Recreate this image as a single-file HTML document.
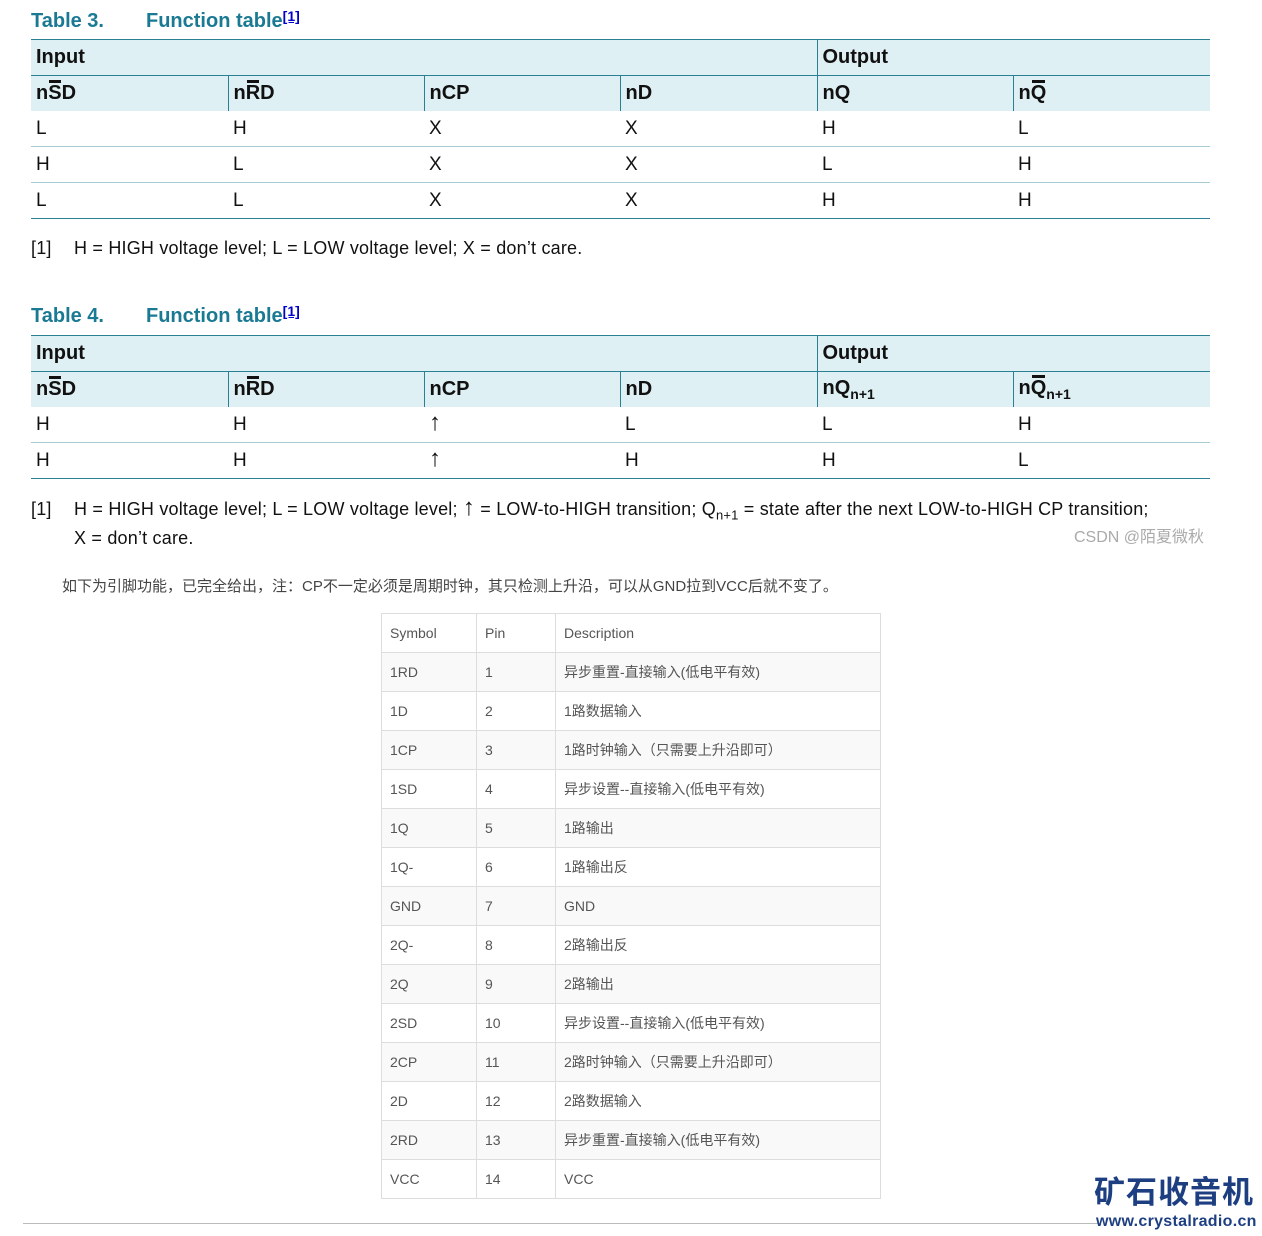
<!DOCTYPE html>
<html><head><meta charset="utf-8"><style>
body{margin:0;width:1262px;height:1236px;background:#fff;position:relative;font-family:"Liberation Sans",Arial,sans-serif;overflow:hidden}
.t{position:absolute;font-weight:bold;font-size:20px;color:#1b7a93}
.t sup{font-size:14px;color:#0000cc;text-decoration:underline;vertical-align:6px}
table.f{position:absolute;left:31px;width:1179px;border-collapse:collapse;table-layout:fixed;font-size:19px;color:#111}
table.f td{padding:0 0 0 5px;height:35px;border-bottom:1px solid #a9cdd6;vertical-align:middle}
table.f tr.h td{background:#dff0f4;font-weight:bold;font-size:20px}
table.f tr.top td{border-top:1px solid #2b7f93;border-bottom:1px solid #2b7f93}
table.f tr.h2 td{border-bottom:none;border-left:1px solid #2b7f93}
table.f tr.h2 td:first-child{border-left:none}
table.f tr.last td{border-bottom:1px solid #2b7f93}
.ob{position:relative}
.ob:before{content:"";position:absolute;left:1px;right:1px;top:-2px;height:3px;background:#111}
.ar{font-size:24px;line-height:20px}
.note{position:absolute;left:31px;font-size:18px;color:#111;letter-spacing:0.2px}
.note b{font-weight:normal;display:inline-block;width:43px}
.p{position:absolute;left:381px;top:613px;width:500px;border-collapse:collapse;table-layout:fixed;font-size:14px;color:#555;font-family:"Liberation Sans","Noto Sans CJK SC",sans-serif}
.p td{height:38px;border:1px solid #ddd;padding:0 0 0 8px}
.p tr:nth-child(even) td{background:#f9f9f9}
</style></head><body>
<div class="t" style="left:31px;top:8px">Table 3.<span style="margin-left:42px">Function table</span><sup>[1]</sup></div>
<table class="f" style="top:39px">
<colgroup><col style="width:197px"><col style="width:196px"><col style="width:196px"><col style="width:197px"><col style="width:196px"><col style="width:197px"></colgroup>
<tr class="h top"><td colspan="4">Input</td><td colspan="2" style="border-left:1px solid #2b7f93">Output</td></tr>
<tr class="h h2"><td>n<span class="ob">S</span>D</td><td>n<span class="ob">R</span>D</td><td>nCP</td><td>nD</td><td>nQ</td><td>n<span class="ob">Q</span></td></tr>
<tr><td>L</td><td>H</td><td>X</td><td>X</td><td>H</td><td>L</td></tr>
<tr><td>H</td><td>L</td><td>X</td><td>X</td><td>L</td><td>H</td></tr>
<tr class="last"><td>L</td><td>L</td><td>X</td><td>X</td><td>H</td><td>H</td></tr>
</table>
<div class="note" style="top:238px"><b>[1]</b>H = HIGH voltage level; L = LOW voltage level; X = don’t care.</div>

<div class="t" style="left:31px;top:303px">Table 4.<span style="margin-left:42px">Function table</span><sup>[1]</sup></div>
<table class="f" style="top:335px">
<colgroup><col style="width:197px"><col style="width:196px"><col style="width:196px"><col style="width:197px"><col style="width:196px"><col style="width:197px"></colgroup>
<tr class="h top"><td colspan="4">Input</td><td colspan="2" style="border-left:1px solid #2b7f93">Output</td></tr>
<tr class="h h2"><td>n<span class="ob">S</span>D</td><td>n<span class="ob">R</span>D</td><td>nCP</td><td>nD</td><td>nQ<sub style="font-size:14px">n+1</sub></td><td>n<span class="ob">Q</span><sub style="font-size:14px">n+1</sub></td></tr>
<tr><td>H</td><td>H</td><td><span class="ar">↑</span></td><td>L</td><td>L</td><td>H</td></tr>
<tr class="last"><td>H</td><td>H</td><td><span class="ar">↑</span></td><td>H</td><td>H</td><td>L</td></tr>
</table>
<div class="note" style="top:498px;line-height:23px"><b>[1]</b>H = HIGH voltage level; L = LOW voltage level; <span class="ar">↑</span> = LOW-to-HIGH transition; Q<sub style="font-size:13px">n+1</sub> = state after the next LOW-to-HIGH CP transition;<br><b></b>X = don’t care.</div>
<div style="position:absolute;left:1074px;top:523px;font-size:16px;color:#aaa;font-family:'Liberation Sans','Noto Sans CJK SC',sans-serif">CSDN @陌夏微秋</div>

<div style="position:absolute;left:62px;top:575px;font-size:15px;color:#444;font-family:'Liberation Sans','Noto Sans CJK SC',sans-serif">如下为引脚功能，已完全给出，注：CP不一定必须是周期时钟，其只检测上升沿，可以从GND拉到VCC后就不变了。</div>

<table class="p">
<colgroup><col style="width:95px"><col style="width:79px"><col></colgroup>
<tr><td>Symbol</td><td>Pin</td><td>Description</td></tr>
<tr><td>1RD</td><td>1</td><td>异步重置-直接输入(低电平有效)</td></tr>
<tr><td>1D</td><td>2</td><td>1路数据输入</td></tr>
<tr><td>1CP</td><td>3</td><td>1路时钟输入（只需要上升沿即可）</td></tr>
<tr><td>1SD</td><td>4</td><td>异步设置--直接输入(低电平有效)</td></tr>
<tr><td>1Q</td><td>5</td><td>1路输出</td></tr>
<tr><td>1Q-</td><td>6</td><td>1路输出反</td></tr>
<tr><td>GND</td><td>7</td><td>GND</td></tr>
<tr><td>2Q-</td><td>8</td><td>2路输出反</td></tr>
<tr><td>2Q</td><td>9</td><td>2路输出</td></tr>
<tr><td>2SD</td><td>10</td><td>异步设置--直接输入(低电平有效)</td></tr>
<tr><td>2CP</td><td>11</td><td>2路时钟输入（只需要上升沿即可）</td></tr>
<tr><td>2D</td><td>12</td><td>2路数据输入</td></tr>
<tr><td>2RD</td><td>13</td><td>异步重置-直接输入(低电平有效)</td></tr>
<tr><td>VCC</td><td>14</td><td>VCC</td></tr>
</table>
<div style="position:absolute;left:23px;top:1223px;width:1075px;height:1px;background:#bbb"></div>
<div style="position:absolute;left:1094px;top:1172px;font-size:31px;font-weight:bold;color:#1d3f82;letter-spacing:1px;font-family:'Noto Sans CJK SC',sans-serif;line-height:36px">矿石收音机</div>
<div style="position:absolute;left:1096px;top:1213px;font-size:16px;font-weight:bold;color:#1d3f82;letter-spacing:0.3px">www.crystalradio.cn</div>
</body></html>
